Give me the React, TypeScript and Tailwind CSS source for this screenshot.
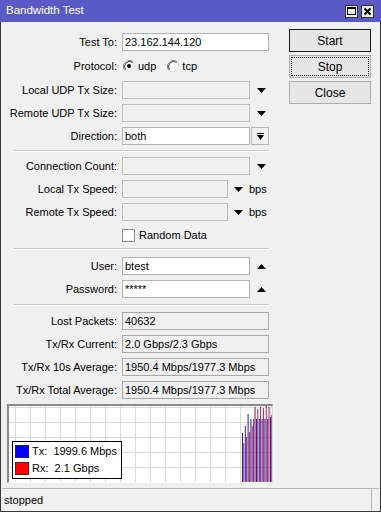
import React from 'react';

const font = "font-['Liberation_Sans',Arial,sans-serif]";

const DownArrow = () => (
    <svg width="9" height="5" viewBox="0 0 9 5" className="block">
        <path d="M0 0H9L4.5 5Z" fill="#000" />
    </svg>
);

const UpArrow = () => (
    <svg width="9" height="5" viewBox="0 0 9 5" className="block">
        <path d="M0 5H9L4.5 0Z" fill="#000" />
    </svg>
);

const Label = ({ text }: { text: string }) => (
    <div className="w-[116px] text-right whitespace-nowrap">{text}</div>
);

const Field = ({ value, width, variant = 'white' }: { value?: string; width: string; variant?: 'white' | 'disabled' | 'readonly' }) => {
    const look =
        variant === 'white'
            ? 'bg-white border-[#b4b4b4]'
            : variant === 'disabled'
                ? 'bg-[#f0f0f0] border-[#bdbdbd]'
                : 'bg-[#f0f0f0] border-[#a8a8a8]';
    return (
        <div className={`${width} h-[18px] border ${look} ml-[5px] pl-[2px] flex items-center whitespace-nowrap overflow-hidden`}>
            {value}
        </div>
    );
};

const Separator = ({ className }: { className: string }) => (
    <div className={`ml-[13px] w-[255px] h-[2px] border-t border-[#c9c9c9] border-b border-b-white ${className}`} />
);

const Radio = ({ checked }: { checked?: boolean }) => (
    <svg width="12" height="12" viewBox="0 0 12 12" className="block">
        <path d="M10.2 1.8A6 6 0 0 0 1.8 10.2" fill="none" stroke="#7a7a7a" strokeWidth="1" />
        <path d="M1.8 10.2A6 6 0 0 0 10.2 1.8" fill="none" stroke="#d8d8d8" strokeWidth="1" />
        <circle cx="6" cy="6" r="5" fill="#fff" />
        <path d="M9.5 2.5A5 5 0 0 0 2.5 9.5" fill="none" stroke="#404040" strokeWidth="1" />
        {checked && <circle cx="6" cy="6" r="2" fill="#000" />}
    </svg>
);

// tx (blue) / rx (red) bar tops, absolute y
const bars: [number, number][] = [
    [433, 443],
    [426, 437],
    [414, 432],
    [419, 426],
    [419, 407],
    [419, 409],
    [419, 407],
    [419, 408],
    [419, 406],
    [419, 407],
    [417, 415],
];

const Graph = () => {
    const vLines = [];
    for (let x = 15; x <= 270; x += 15) vLines.push(x);
    const hLines = [407, 422, 437, 452, 467];
    return (
        <div className="relative ml-[6px] mt-[5px] w-[266px] h-[79px] border-t-2 border-l-2 border-[#8a8a8a] border-r border-r-[#dcdcdc] border-b border-b-white bg-white">
            <svg width="263" height="76" viewBox="9 406 263 76" className="block">
                {vLines.map(x => (
                    <line key={`v${x}`} x1={x + 0.5} y1="406" x2={x + 0.5} y2="482" stroke="#dadada" />
                ))}
                {hLines.map(y => (
                    <line key={`h${y}`} x1="9" y1={y + 0.5} x2="272" y2={y + 0.5} stroke="#dadada" />
                ))}
                {bars.map(([tx, rx], i) => {
                    const x = 242.5 + i * 2.8;
                    return (
                        <g key={i}>
                            <line x1={x} y1={tx} x2={x} y2="482" stroke="#2a20a8" strokeWidth="1" />
                            <line x1={x + 1.3} y1={rx} x2={x + 1.3} y2="482" stroke="#a82050" strokeWidth="1" />
                        </g>
                    );
                })}
            </svg>
            <div className="absolute left-[3px] top-[35px] w-[110px] h-[38px] bg-white border border-black pt-[1px] pl-[2px]">
                <div className="h-[17px] flex items-center">
                    <div className="w-[14px] h-[13px] bg-[#0000ff] border border-[#202060]" />
                    <span className="ml-[3px] whitespace-pre">Tx:  1999.6 Mbps</span>
                </div>
                <div className="h-[17px] flex items-center">
                    <div className="w-[14px] h-[13px] bg-[#ff0000] border border-[#602020]" />
                    <span className="ml-[3px] whitespace-pre">Rx:  2.1 Gbps</span>
                </div>
            </div>
        </div>
    );
};

export default function App() {
    return (
        <div className={`w-[381px] h-[512px] flex flex-col bg-[#f0f0f0] text-[11px] text-black ${font}`}>
            <div className="h-[22px] bg-[#5a5ac6] flex items-center pl-[6px] pr-[7px] shrink-0">
                <span className="text-white text-[11.5px]">Bandwidth Test</span>
                <div className="ml-auto flex items-center gap-[3px]">
                    <div className="w-[13px] h-[13px] bg-[#ececec] border border-[#333] flex items-center justify-center">
                        <div className="w-[9px] h-[8px] border border-black border-t-2" />
                    </div>
                    <div className="w-[13px] h-[13px] bg-[#ececec] border border-[#333] flex items-center justify-center">
                        <svg width="9" height="9" viewBox="0 0 9 9" className="block">
                            <path d="M1.5 1.5L7.5 7.5M7.5 1.5L1.5 7.5" stroke="#000" strokeWidth="2" />
                        </svg>
                    </div>
                </div>
            </div>

            <div className="flex-1 flex flex-col border-x border-b border-[#3a3a3a] min-h-0">
                <div className="flex-1 flex min-h-0">
                    {/* fields */}
                    <div className="w-[287px] flex flex-col pt-[11px]">
                        <div className="h-[18px] flex items-center">
                            <Label text="Test To:" />
                            <Field value="23.162.144.120" width="w-[147px]" />
                        </div>
                        <div className="h-[18px] mt-[6px] flex items-center">
                            <Label text="Protocol:" />
                            <div className="ml-[6px] flex items-center">
                                <Radio checked />
                                <span className="ml-[3px]">udp</span>
                                <div className="ml-[11px]"><Radio /></div>
                                <span className="ml-[3px]">tcp</span>
                            </div>
                        </div>
                        <div className="h-[18px] mt-[6px] flex items-center">
                            <Label text="Local UDP Tx Size:" />
                            <Field width="w-[128px]" variant="disabled" />
                            <div className="ml-[7px]"><DownArrow /></div>
                        </div>
                        <div className="h-[18px] mt-[5px] flex items-center">
                            <Label text="Remote UDP Tx Size:" />
                            <Field width="w-[128px]" variant="disabled" />
                            <div className="ml-[7px]"><DownArrow /></div>
                        </div>
                        <div className="h-[18px] mt-[5px] flex items-center">
                            <Label text="Direction:" />
                            <Field value="both" width="w-[128px]" />
                            <div className="ml-[1px] w-[18px] h-[18px] border border-[#b4b4b4] bg-[#f0f0f0] flex flex-col items-center justify-center">
                                <div className="w-[7px] h-[1px] bg-black" />
                                <svg width="7" height="5" viewBox="0 0 7 5" className="block mt-[1px]">
                                    <path d="M0 0H7L3.5 5Z" fill="#000" />
                                </svg>
                            </div>
                        </div>
                        <Separator className="mt-[5px]" />
                        <div className="h-[18px] mt-[5px] flex items-center">
                            <Label text="Connection Count:" />
                            <Field width="w-[128px]" variant="disabled" />
                            <div className="ml-[7px]"><DownArrow /></div>
                        </div>
                        <div className="h-[18px] mt-[5px] flex items-center">
                            <Label text="Local Tx Speed:" />
                            <Field width="w-[106px]" variant="disabled" />
                            <div className="ml-[6px]"><DownArrow /></div>
                            <span className="ml-[6px]">bps</span>
                        </div>
                        <div className="h-[18px] mt-[5px] flex items-center">
                            <Label text="Remote Tx Speed:" />
                            <Field width="w-[106px]" variant="disabled" />
                            <div className="ml-[6px]"><DownArrow /></div>
                            <span className="ml-[6px]">bps</span>
                        </div>
                        <div className="h-[18px] mt-[5px] flex items-center">
                            <div className="ml-[121px] w-[13px] h-[13px] bg-white border border-[#8c8c8c]" />
                            <span className="ml-[4px]">Random Data</span>
                        </div>
                        <Separator className="mt-[4px]" />
                        <div className="h-[18px] mt-[7px] flex items-center">
                            <Label text="User:" />
                            <Field value="btest" width="w-[128px]" />
                            <div className="ml-[7px]"><UpArrow /></div>
                        </div>
                        <div className="h-[18px] mt-[5px] flex items-center">
                            <Label text="Password:" />
                            <Field value="*****" width="w-[128px]" />
                            <div className="ml-[7px]"><UpArrow /></div>
                        </div>
                        <Separator className="mt-[6px]" />
                        <div className="h-[18px] mt-[6px] flex items-center">
                            <Label text="Lost Packets:" />
                            <Field value="40632" width="w-[147px]" variant="readonly" />
                        </div>
                        <div className="h-[18px] mt-[5px] flex items-center">
                            <Label text="Tx/Rx Current:" />
                            <Field value="2.0 Gbps/2.3 Gbps" width="w-[147px]" variant="readonly" />
                        </div>
                        <div className="h-[18px] mt-[5px] flex items-center">
                            <Label text="Tx/Rx 10s Average:" />
                            <Field value="1950.4 Mbps/1977.3 Mbps" width="w-[147px]" variant="readonly" />
                        </div>
                        <div className="h-[18px] mt-[5px] flex items-center">
                            <Label text="Tx/Rx Total Average:" />
                            <Field value="1950.4 Mbps/1977.3 Mbps" width="w-[147px]" variant="readonly" />
                        </div>
                        <Graph />
                    </div>

                    {/* buttons */}
                    <div className="flex flex-col pt-[7px] ml-[1px] gap-[3px]">
                        <button className="w-[82px] h-[23px] border border-[#1a1a1a] bg-[#e6e6e6] text-[12px]">Start</button>
                        <button className="w-[82px] h-[23px] border border-[#adadad] bg-[#e6e6e6] p-[1px] text-[12px]">
                            <div className="w-full h-full border border-dotted border-black flex items-center justify-center">Stop</div>
                        </button>
                        <button className="w-[82px] h-[23px] border border-[#adadad] bg-[#e6e6e6] text-[12px]">Close</button>
                    </div>
                </div>

                <div className="h-[23px] shrink-0 flex border-t border-[#b8b8b8] mx-[1px]">
                    <div className="w-[370px] h-full border-r border-[#b8b8b8] pl-[2px] flex items-center">stopped</div>
                </div>
            </div>
        </div>
    );
}
